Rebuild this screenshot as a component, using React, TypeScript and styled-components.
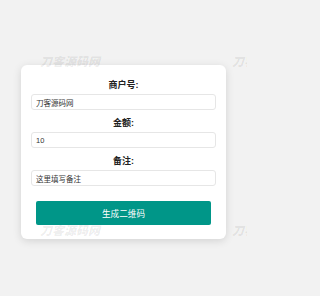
import styled, { createGlobalStyle } from "styled-components";

const GlobalStyle = createGlobalStyle`
  html, body {
    margin: 0;
    padding: 0;
    background: #f2f2f2;
    font-family: "Liberation Sans", "Noto Sans CJK SC", sans-serif;
  }
`;

const fields = [
  { label: "商户号:", value: "刀客源码网" },
  { label: "金额:", value: "10" },
  { label: "备注:", value: "这里填写备注" },
];

export default function App() {
  return (
    <Frame>
      <GlobalStyle />
      <Page>
        <Card>
          {fields.map((f, i) => (
            <Field key={`field${i}`}>
              <Label>{f.label}</Label>
              <Input defaultValue={f.value} />
            </Field>
          ))}
          <Button>生成二维码</Button>
        </Card>
      </Page>
      {/* watermark layer sits over the page */}
      <Watermarks>
        {[0, 1, 2, 3].map((i) => (
          <Mark key={`mark${i}`}>刀客源码网</Mark>
        ))}
      </Watermarks>
    </Frame>
  );
}

const Frame = styled.div`
  position: relative;
  width: 247px;
  height: 296px;
  overflow: hidden;
  background: #f2f2f2;
`;

const Page = styled.div`
  box-sizing: border-box;
  padding: 65px 21px 0 21px;
`;

const Card = styled.div`
  background: #fff;
  border-radius: 6px;
  box-shadow: 0 2px 8px rgba(0, 0, 0, 0.13);
  padding: 15px 10px 14px 10px;
  display: flex;
  flex-direction: column;
`;

const Field = styled.div`
  display: flex;
  flex-direction: column;
  margin-bottom: 8px;
`;

const Label = styled.div`
  text-align: center;
  font-size: 9px;
  line-height: 10px;
  font-weight: bold;
  color: #222;
  margin-bottom: 4px;
`;

const Input = styled.input`
  box-sizing: border-box;
  height: 16px;
  width: 100%;
  border: 1px solid #e6e6e6;
  border-radius: 3px;
  padding: 0 4px;
  font-family: "Liberation Sans", "Noto Sans CJK SC", sans-serif;
  font-size: 7.5px;
  color: #333;
  outline: none;
`;

const Button = styled.button`
  align-self: center;
  margin-top: 7px;
  width: 95%;
  height: 24px;
  border: none;
  border-radius: 2px;
  background: #009688;
  color: #fff;
  font-family: "Liberation Sans", "Noto Sans CJK SC", sans-serif;
  font-size: 8.6px;
`;

const Watermarks = styled.div`
  position: absolute;
  inset: 0;
  pointer-events: none;
  display: grid;
  grid-template-columns: 192px 192px;
  grid-auto-rows: 169px;
  padding: 54px 0 0 40px;
`;

const Mark = styled.div`
  font-size: 12px;
  line-height: 14px;
  font-weight: 900;
  font-style: italic;
  white-space: nowrap;
  color: rgba(0, 0, 0, 0.08);
  font-family: "Noto Sans CJK SC", sans-serif;
`;
